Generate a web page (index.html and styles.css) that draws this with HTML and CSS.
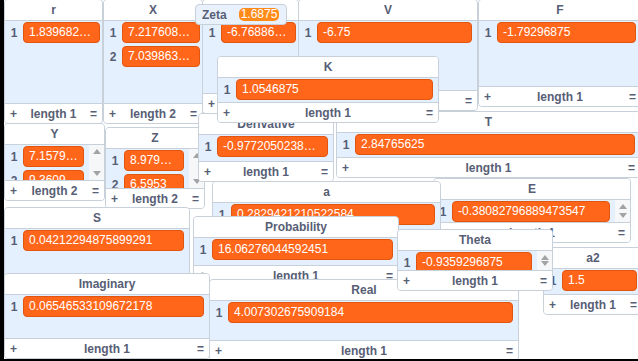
FILE: index.html
```html
<!DOCTYPE html>
<html lang="en">
<head>
    <meta charset="UTF-8">
    <meta name="viewport" content="width=device-width, initial-scale=1.0">
    <title>Stage monitors</title>
    <link rel="stylesheet" href="styles.css">
</head>
<body>

    <!-- Stage with list and variable monitors -->
    <div class="stage">

        <div class="list tight m-r">
            <div class="list-head">r</div>
            <div class="list-body">
                <div class="list-items">
                    <div class="row"><span class="idx">1</span><span class="val">1.839682769775390</span></div>
                </div>
            </div>
            <div class="list-foot"><span>+</span><span>length 1</span><span>=</span></div>
        </div>

        <div class="list tight m-x">
            <div class="list-head">X</div>
            <div class="list-body">
                <div class="list-items">
                    <div class="row"><span class="idx">1</span><span class="val">7.217608928680420</span></div>
                    <div class="row"><span class="idx">2</span><span class="val">7.039863586425781</span></div>
                </div>
            </div>
            <div class="list-foot"><span>+</span><span>length 2</span><span>=</span></div>
        </div>

        <div class="list tight m-w">
            <div class="list-head">W</div>
            <div class="list-body">
                <div class="list-items">
                    <div class="row"><span class="idx">1</span><span class="val">-6.768860816955566</span></div>
                </div>
            </div>
            <div class="list-foot"><span>+</span><span>length 1</span><span>=</span></div>
        </div>

        <div class="list m-v">
            <div class="list-head">V</div>
            <div class="list-body">
                <div class="list-items">
                    <div class="row"><span class="idx">1</span><span class="val">-6.75</span></div>
                </div>
            </div>
            <div class="list-foot"><span>+</span><span>length 1</span><span>=</span></div>
        </div>

        <div class="list m-f">
            <div class="list-head">F</div>
            <div class="list-body">
                <div class="list-items">
                    <div class="row"><span class="idx">1</span><span class="val">-1.79296875</span></div>
                </div>
            </div>
            <div class="list-foot"><span>+</span><span>length 1</span><span>=</span></div>
        </div>

        <div class="list m-t">
            <div class="list-head">T</div>
            <div class="list-body">
                <div class="list-items">
                    <div class="row"><span class="idx">1</span><span class="val">2.84765625</span></div>
                </div>
            </div>
            <div class="list-foot"><span>+</span><span>length 1</span><span>=</span></div>
        </div>

        <div class="var m-zeta">
            <span class="var-label">Zeta</span>
            <span class="var-value">1.6875</span>
        </div>

        <div class="list m-y">
            <div class="list-head">Y</div>
            <div class="list-body">
                <div class="list-items">
                    <div class="row"><span class="idx">1</span><span class="val">7.157946586608887</span></div>
                    <div class="row"><span class="idx">2</span><span class="val">9.360940933227539</span></div>
                </div>
                <div class="scroll"><i class="up"></i><i class="down"></i></div>
            </div>
            <div class="list-foot"><span>+</span><span>length 2</span><span>=</span></div>
        </div>

        <div class="list m-z">
            <div class="list-head">Z</div>
            <div class="list-body">
                <div class="list-items">
                    <div class="row"><span class="idx">1</span><span class="val">8.979804992675781</span></div>
                    <div class="row"><span class="idx">2</span><span class="val">6.5953</span></div>
                </div>
                <div class="scroll"><i class="up"></i><i class="down"></i></div>
            </div>
            <div class="list-foot"><span>+</span><span>length 2</span><span>=</span></div>
        </div>

        <div class="list m-deriv">
            <div class="list-head">Derivative</div>
            <div class="list-body">
                <div class="list-items">
                    <div class="row"><span class="idx">1</span><span class="val">-0.977205023849010</span></div>
                </div>
            </div>
            <div class="list-foot"><span>+</span><span>length 1</span><span>=</span></div>
        </div>

        <div class="list m-k">
            <div class="list-head">K</div>
            <div class="list-body">
                <div class="list-items">
                    <div class="row"><span class="idx">1</span><span class="val">1.0546875</span></div>
                </div>
            </div>
            <div class="list-foot"><span>+</span><span>length 1</span><span>=</span></div>
        </div>

        <div class="list m-e">
            <div class="list-head">E</div>
            <div class="list-body">
                <div class="list-items">
                    <div class="row"><span class="idx">1</span><span class="val">-0.38082796889473547</span></div>
                </div>
                <div class="scroll"><i class="up"></i><i class="down"></i></div>
            </div>
            <div class="list-foot"><span>+</span><span>length 1</span><span>=</span></div>
        </div>

        <div class="list m-a">
            <div class="list-head">a</div>
            <div class="list-body">
                <div class="list-items">
                    <div class="row"><span class="idx">1</span><span class="val">0.2829421210522584</span></div>
                </div>
            </div>
            <div class="list-foot"><span>+</span><span>length 1</span><span>=</span></div>
        </div>

        <div class="list m-s">
            <div class="list-head">S</div>
            <div class="list-body">
                <div class="list-items">
                    <div class="row"><span class="idx">1</span><span class="val">0.04212294875899291</span></div>
                </div>
            </div>
            <div class="list-foot"><span>+</span><span>length 1</span><span>=</span></div>
        </div>

        <div class="list m-prob">
            <div class="list-head">Probability</div>
            <div class="list-body">
                <div class="list-items">
                    <div class="row"><span class="idx">1</span><span class="val">16.06276044592451</span></div>
                </div>
            </div>
            <div class="list-foot"><span>+</span><span>length 1</span><span>=</span></div>
        </div>

        <div class="list m-imag">
            <div class="list-head">Imaginary</div>
            <div class="list-body">
                <div class="list-items">
                    <div class="row"><span class="idx">1</span><span class="val">0.06546533109672178</span></div>
                </div>
            </div>
            <div class="list-foot"><span>+</span><span>length 1</span><span>=</span></div>
        </div>

        <div class="list m-real">
            <div class="list-head">Real</div>
            <div class="list-body">
                <div class="list-items">
                    <div class="row"><span class="idx">1</span><span class="val">4.007302675909184</span></div>
                </div>
            </div>
            <div class="list-foot"><span>+</span><span>length 1</span><span>=</span></div>
        </div>

        <div class="list m-a2">
            <div class="list-head">a2</div>
            <div class="list-body">
                <div class="list-items">
                    <div class="row"><span class="idx">1</span><span class="val">1.5</span></div>
                </div>
            </div>
            <div class="list-foot"><span>+</span><span>length 1</span><span>=</span></div>
        </div>

        <div class="list m-theta">
            <div class="list-head">Theta</div>
            <div class="list-body">
                <div class="list-items">
                    <div class="row"><span class="idx">1</span><span class="val">-0.9359296875</span></div>
                </div>
                <div class="scroll"><i class="up"></i><i class="down"></i></div>
            </div>
            <div class="list-foot"><span>+</span><span>length 1</span><span>=</span></div>
        </div>

    </div>

</body>
</html>
```

FILE: styles.css
```css
body {
    margin: 0;
    padding: 0;
    background-color: #000000;
}

.stage {
    position: relative;
    width: 634px;
    height: 359px;
    margin-left: 4px;
    background-color: #ffffff;
    overflow: hidden;
    font-family: "Liberation Sans", Arial, sans-serif;
    font-size: 12px;
    color: #575e75;
}

/* List monitor */
.list {
    position: absolute;
    display: flex;
    flex-direction: column;
    box-sizing: border-box;
    background-color: #e5f0ff;
    border: 1px solid #c8d0da;
    border-radius: 4px;
    overflow: hidden;
}

.list-head {
    flex: none;
    height: 20px;
    line-height: 20px;
    background-color: #ffffff;
    border-bottom: 1px solid #c8d0da;
    text-align: center;
    font-weight: bold;
}

.list-body {
    flex: 1;
    min-height: 0;
    display: flex;
    overflow: hidden;
}

.list-items {
    flex: 1;
    min-width: 0;
    padding: 1px 5px 0 3px;
}

.tight .list-items {
    padding-right: 2px;
}

.row {
    display: flex;
    align-items: center;
    height: 21px;
    margin-bottom: 3px;
}

.idx {
    flex: none;
    width: 12px;
    margin-right: 3px;
    text-align: center;
    font-weight: bold;
}

.val {
    flex: 1;
    min-width: 0;
    height: 21px;
    box-sizing: border-box;
    line-height: 19px;
    padding: 0 5px;
    background-color: #ff661a;
    border: 1px solid #e2550f;
    border-radius: 4px;
    color: #ffffff;
    white-space: nowrap;
    overflow: hidden;
    text-overflow: ellipsis;
}

.scroll {
    flex: none;
    width: 15px;
    box-sizing: border-box;
    padding: 4px 0;
    display: flex;
    flex-direction: column;
    justify-content: space-between;
    align-items: center;
    background-color: #f5f7f9;
}

.scroll .up {
    width: 0;
    height: 0;
    border-left: 4px solid transparent;
    border-right: 4px solid transparent;
    border-bottom: 5px solid #a3a3a3;
}

.scroll .down {
    width: 0;
    height: 0;
    border-left: 4px solid transparent;
    border-right: 4px solid transparent;
    border-top: 5px solid #a3a3a3;
}

.list-foot {
    flex: none;
    height: 19px;
    display: flex;
    justify-content: space-between;
    align-items: center;
    padding: 0 5px;
    background-color: #ffffff;
    border-top: 1px solid #c8d0da;
    font-weight: bold;
}

/* Variable monitor */
.var {
    position: absolute;
    display: flex;
    align-items: center;
    height: 21px;
    box-sizing: border-box;
    padding: 0 5px 0 6px;
    background-color: #e9f1fc;
    border: 1px solid #c8d0da;
    border-radius: 4px;
}

.var-label {
    font-weight: bold;
    margin-right: 12px;
}

.var-value {
    line-height: 13px;
    padding: 0 2px;
    min-width: 36px;
    text-align: center;
    background-color: #ff8c1a;
    border-radius: 5px;
    color: #ffffff;
    margin-right: 2px;
}

/* Monitor placement on the stage */
.m-r { left: 0; top: -1px; width: 99px; height: 125px; }
.m-x { left: 99px; top: -1px; width: 100px; height: 125px; }
.m-w { left: 198px; top: -1px; width: 97px; height: 115px; }
.m-v { left: 294px; top: -1px; width: 180px; height: 112px; }
.m-f { left: 474px; top: -1px; width: 164px; height: 108px; }
.m-t { left: 332px; top: 111px; width: 305px; height: 67px; }
.m-zeta { left: 191px; top: 4px; }
.m-y { left: 0; top: 123px; width: 101px; height: 78px; }
.m-z { left: 101px; top: 127px; width: 100px; height: 82px; }
.m-deriv { left: 194px; top: 113px; width: 136px; height: 69px; }
.m-k { left: 213px; top: 56px; width: 222px; height: 67px; }
.m-e { left: 429px; top: 178px; width: 198px; height: 65px; }
.m-a { left: 208px; top: 181px; width: 229px; height: 80px; }
.m-s { left: 0; top: 207px; width: 186px; height: 110px; }
.m-prob { left: 189px; top: 216px; width: 206px; height: 70px; }
.m-imag { left: 0; top: 273px; width: 206px; height: 86px; }
.m-real { left: 205px; top: 279px; width: 310px; height: 82px; }
.m-a2 { left: 539px; top: 247px; width: 100px; height: 68px; }
.m-theta { left: 393px; top: 229px; width: 156px; height: 62px; }
```
